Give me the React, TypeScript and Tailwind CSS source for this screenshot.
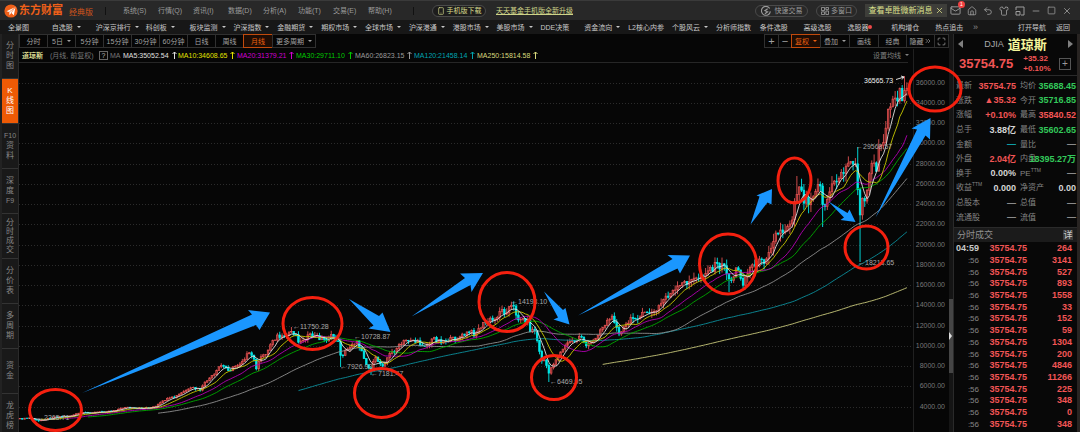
import type { ReactNode } from 'react';
import { ChevronsRight, House, Mail, Maximize, Minus, Shirt, Smartphone, Square, Undo2, X } from 'lucide-react';

type Point = [number, number];

const systemMenus = ['系统(S)', '行情(Q)', '资讯(I)', '数据(D)', '分析(A)', '功能(T)', '交易(E)', '帮助(H)'];

const markets: { label: string; menu?: boolean; dot?: boolean; wide?: boolean }[] = [
  { label: '全景图' },
  { label: '自选股', menu: true },
  { label: '沪深京排行', menu: true, wide: true },
  { label: '科创板', menu: true },
  { label: '板块监测', menu: true },
  { label: '沪深指数', menu: true },
  { label: '金融期货', menu: true },
  { label: '期权市场', menu: true },
  { label: '全球市场', menu: true },
  { label: '沪深港通', menu: true },
  { label: '港股市场', menu: true },
  { label: '美股市场', menu: true },
  { label: 'DDE决策' },
  { label: '资金流向', menu: true },
  { label: 'L2核心内参' },
  { label: '个股风云', menu: true },
  { label: '分析师指数' },
  { label: '条件选股' },
  { label: '高级选股' },
  { label: '选股器', dot: true },
  { label: '机构增仓' },
  { label: '热点追击' },
];

const sideTabs = [
  ['分', '时', '图'],
  ['K', '线', '图'],
  ['F10', '资', '料'],
  ['深', '度', 'F9'],
  ['分', '时', '成', '交'],
  ['分', '价', '表'],
  ['多', '周', '期'],
  ['资', '金'],
  ['龙', '虎', '榜'],
];

const periods = ['分时', '5日', '5分钟', '15分钟', '30分钟', '60分钟', '日线', '周线', '月线'];

const legend = [
  { label: 'MA5:35052.54', color: 'text-[#e0e0e0]', width: 'w-[55px]' },
  { label: 'MA10:34608.65', color: 'text-[#e0e000]', width: 'w-[59px]' },
  { label: 'MA20:31379.21', color: 'text-[#d000d0]', width: 'w-[59px]' },
  { label: 'MA30:29711.10', color: 'text-[#00c800]', width: 'w-[59px]' },
  { label: 'MA60:26823.15', color: 'text-[#9a9a9a]', width: 'w-[59px]' },
  { label: 'MA120:21458.14', color: 'text-[#00a5b0]', width: 'w-[63px]' },
  { label: 'MA250:15814.58', color: 'text-[#d8d87c]', width: 'w-[63px]' },
];

const RED = 'text-[#f25555]';
const GREEN = 'text-[#33c95a]';
const WHITE = 'text-[#d5d5d5]';

const quotes: { label: string; sup?: string; value: string; color: string }[] = [
  { label: '最新', value: '35754.75', color: RED },
  { label: '均价', value: '35688.45', color: GREEN },
  { label: '涨跌', value: '▲35.32', color: RED },
  { label: '今开', value: '35716.85', color: GREEN },
  { label: '涨幅', value: '+0.10%', color: RED },
  { label: '最高', value: '35840.52', color: RED },
  { label: '总手', value: '3.88亿', color: WHITE },
  { label: '最低', value: '35602.65', color: GREEN },
  { label: '金额', value: '—', color: 'text-[#0e9da5]' },
  { label: '量比', value: '—', color: 'text-[#8a8a8a]' },
  { label: '外盘', value: '2.04亿', color: RED },
  { label: '内盘', value: '18395.27万', color: GREEN },
  { label: '换手', value: '0.00%', color: WHITE },
  { label: 'PE', sup: 'TTM', value: '—', color: 'text-[#8a8a8a]' },
  { label: '收益', sup: 'TTM', value: '0.000', color: WHITE },
  { label: '净资产', value: '0.00', color: WHITE },
  { label: '总股本', value: '—', color: 'text-[#8a8a8a]' },
  { label: '总值', value: '—', color: 'text-[#8a8a8a]' },
  { label: '流通股', value: '—', color: 'text-[#8a8a8a]' },
  { label: '流值', value: '—', color: 'text-[#8a8a8a]' },
];

const volumes = [264, 3141, 527, 893, 1558, 33, 152, 59, 1304, 200, 4846, 11266, 225, 348, 0, 348];

// closing line of the index, in chart units
const closes: Point[] = [
  [20, 419], [30, 418], [38, 421], [55, 417], [70, 416], [80, 413], [90, 413], [100, 412], [110, 411], [120, 409],
  [125, 407], [135, 409], [145, 408], [155, 407], [165, 400], [175, 397], [185, 391], [193, 388], [200, 390],
  [208, 379], [215, 375], [220, 365], [230, 370], [240, 363], [248, 354], [253, 356], [256, 368], [262, 356],
  [268, 351], [272, 340], [278, 336], [284, 339], [290, 331], [295, 333], [300, 343], [305, 337], [312, 336],
  [318, 337], [325, 340], [333, 336], [338, 342], [341, 356], [347, 350], [353, 342], [357, 343], [362, 350],
  [366, 364], [370, 370], [376, 358], [382, 366], [385, 361], [390, 354], [395, 350], [405, 341], [411, 339],
  [420, 344], [428, 345], [434, 338], [440, 341], [450, 340], [460, 337], [470, 332], [475, 334], [482, 325],
  [490, 320], [495, 320], [500, 310], [505, 312], [510, 306], [514, 308], [518, 318], [523, 320], [527, 319],
  [530, 330], [535, 330], [538, 345], [541, 360], [545, 360], [549, 375], [552, 365], [556, 360], [562, 349],
  [570, 341], [575, 342], [581, 335], [586, 346], [592, 343], [600, 330], [610, 318], [615, 320], [620, 335],
  [625, 326], [635, 316], [640, 317], [647, 312], [655, 313], [665, 297], [675, 291], [685, 282], [695, 280],
  [705, 272], [712, 268], [717, 265], [726, 268], [730, 283], [737, 268], [743, 282], [750, 268], [757, 262],
  [763, 263], [770, 247], [775, 235], [785, 229], [792, 217], [795, 200], [799, 182], [803, 198], [810, 200],
  [818, 182], [821, 190], [824, 210], [830, 190], [835, 183], [840, 175], [848, 165], [855, 158], [857, 175],
  [859, 225], [862, 200], [866, 196], [870, 175], [872, 158], [876, 175], [880, 140], [883, 143], [887, 115],
  [892, 97], [896, 101], [900, 89], [902, 103], [905, 83], [908, 92],
];

const START = 20;
const STEP = 2.34;
const COUNT = 380;

function jitter(i: number) {
  const n = Math.sin(i * 12.9898) * 43758.5453;
  return n - Math.floor(n) - 0.5;
}

function closeAt(x: number) {
  const next = closes.findIndex(([px]) => px >= x);
  if (next <= 0) return closes[next === 0 ? 0 : closes.length - 1][1];
  const [x0, y0] = closes[next - 1];
  const [x1, y1] = closes[next];
  return y0 + ((y1 - y0) * (x - x0)) / (x1 - x0);
}

// long wicks at the turning points
const spikes: Point[] = [
  [38, 422], [291, 327], [341, 367], [371, 375], [511, 302], [549, 382], [730, 292], [743, 288],
  [797, 176], [823, 227], [857, 147], [859, 262], [905, 76],
];

const candles = Array.from({ length: COUNT }, (_, i) => {
  const x = START + i * STEP;
  // the swings grow with the index level
  const swing = 0.8 + Math.min(10, ((420 - closeAt(x)) / 330) * 16);
  return { x, y: closeAt(x) + jitter(i) * swing, swing };
}).map((item, i, all) => {
  const open = i ? all[i - 1].y : item.y;
  let top = Math.min(open, item.y) - Math.abs(jitter(i + 500)) * item.swing * 1.6;
  let bottom = Math.max(open, item.y) + Math.abs(jitter(i + 900)) * item.swing * 1.6;
  spikes.forEach(([sx, sy]) => {
    if (Math.abs(sx - item.x) <= STEP / 2) {
      top = Math.min(top, sy);
      bottom = Math.max(bottom, sy);
    }
  });
  return { x: item.x, open, close: item.y, top, bottom };
});

function average(length: number) {
  const points: string[] = [];
  let sum = 0;
  candles.forEach((c, i) => {
    sum += c.close;
    if (i >= length) sum -= candles[i - length].close;
    if (i >= length - 1) points.push(`${c.x.toFixed(1)},${(sum / length).toFixed(1)}`);
  });
  return points.join(' ');
}

const averages = [
  { length: 250, color: '#c8c87a' },
  { length: 120, color: '#0b8f9c' },
  { length: 60, color: '#909090' },
  { length: 30, color: '#00a800' },
  { length: 20, color: '#b400b4' },
  { length: 10, color: '#c8c800' },
  { length: 5, color: '#e0e0e0' },
];

const marks = [
  { x: 37, y: 418, text: '←2365.71' },
  { x: 293, y: 327, text: '←11750.28' },
  { x: 354, y: 337, text: '←10728.87' },
  { x: 340, y: 367, text: '←7926.93' },
  { x: 371, y: 374, text: '←7181.47' },
  { x: 511, y: 302, text: '←14198.10' },
  { x: 550, y: 382, text: '←6469.95' },
  { x: 856, y: 147, text: '←29568.57' },
  { x: 858, y: 263, text: '←18213.65' },
];

const circles = [
  [55.5, 410, 26, 20.5], [312.5, 323.5, 29.5, 26], [381.5, 393, 27, 24.5], [507, 302, 28, 29.5], [554, 377.5, 22.5, 22],
  [728, 264, 28.5, 30], [794.5, 180.5, 16.5, 22.5], [866.5, 247.5, 21.5, 21.5], [935, 89, 26, 22],
];

const arrows = [
  '82,393 252,314.5 248,310 270,312.5 259.5,330 256,325',
  '349,299 379,316 382.5,312.5 390.5,332 368.5,328.5 373.5,325.5',
  '411.5,316.5 465,278 460,273.5 483,273 471.5,292 470.5,285',
  '544,291.5 563,310 565.5,308 569.5,324.5 553.5,319.5 558,317.5',
  '578,315.5 672.5,259 667.5,255 690,255.5 680,273.5 677.5,268.5',
  '750.5,224.5 759.5,196.5 756.5,195.5 772,189 771.5,204.5 767.5,202.5',
  '828.5,201.5 847.5,213 849.5,209.5 855.5,222 840.5,220 844,217.5',
  '875.5,217.5 917,129.5 911.5,128.5 930.5,118 930,139.5 925.5,135.5',
];

function Chart() {
  return (
    <svg
      viewBox="19 62 930 370"
      className="pointer-events-none block w-full overflow-visible"
      fontFamily='"Liberation Sans", sans-serif'
      fontSize="7"
    >
      <path d="M19 62.5H908" stroke="#262626" />
      <path d="M913.5 49V432" stroke="#202020" />
      {Array.from({ length: 17 }, (_, i) => {
        const value = 4000 + i * 2000;
        const y = 406.5 - i * 20.25;
        return (
          <g key={value}>
            <path d={`M19 ${Math.round(y) + 0.5}H912`} stroke="#2b2b2b" strokeDasharray="1 2" />
            <text x="945" y={y + 2} textAnchor="end" fill="#777777">
              {value}.00
            </text>
          </g>
        );
      })}

      {candles.map((c) => {
        const rising = c.close <= c.open;
        const color = rising ? '#e05252' : '#00e8e8';
        return (
          <g key={c.x} stroke={color} fill={rising ? '#8a2828' : color}>
            <path d={`M${c.x} ${c.top}V${c.bottom}`} strokeWidth="0.9" />
            <rect
              x={c.x - 0.8}
              y={Math.min(c.open, c.close)}
              width="1.6"
              height={Math.max(0.4, Math.abs(c.open - c.close))}
              strokeWidth="0.7"
            />
          </g>
        );
      })}
      {averages.map(({ length, color }) => (
        <polyline key={length} points={average(length)} fill="none" stroke={color} strokeWidth="0.9" />
      ))}

      {marks.map(({ x, y, text }) => (
        <text key={text} x={x} y={y + 2} fill="#a8a8a8">
          {text}
        </text>
      ))}
      <text x="864" y="83" fill="#f0f0f0">
        36565.73
      </text>
      <path d="M896 79.5L904 77M901 76L904 77L902 79.5" stroke="#f0f0f0" strokeWidth="0.9" fill="none" />

      {circles.map(([cx, cy, rx, ry]) => (
        <ellipse key={cx} cx={cx} cy={cy} rx={rx} ry={ry} fill="none" stroke="#f5200f" strokeWidth="3" />
      ))}
      {arrows.map((points) => (
        <polygon key={points} points={points} fill="#1a97ff" />
      ))}
    </svg>
  );
}

function Caret() {
  return <span className="ml-1 inline-block border-x-2 border-t-2 border-x-transparent border-t-current" />;
}

function ToolButton({ active, className, children }: { active?: boolean; className: string; children: ReactNode }) {
  const tone = active ? 'border-[#c24a0c] bg-[#1f0d04] text-[#f0600f]' : 'border-[#303030] text-[#a0a0a0]';
  return (
    <button type="button" className={`-mr-px flex shrink-0 items-center justify-center border ${tone} ${className}`}>
      {children}
    </button>
  );
}

function TitleBar() {
  return (
    <header className="flex h-5 shrink-0 items-center border-t border-[#3a3a3a] bg-[#282828] pl-1 text-[#9c9c9c]">
      <svg viewBox="0 0 14 14" className="h-3.5 w-3.5">
        <circle cx="7" cy="7" r="6.6" fill="#f06019" />
        <path d="M2.5 7.2L11.5 3L9.8 11.2L7.2 8.8L5.6 11.3L5.2 8.1Z" fill="#fff" />
        <path d="M5.2 8.1L11.5 3L7.2 8.8" stroke="#f06019" strokeWidth="0.6" fill="none" />
      </svg>
      <span className="ml-px text-[11px] font-bold text-[#f06019]">东方财富</span>
      <span className="ml-1.5 pt-1 text-[8px] text-[#d2551b]">经典版</span>
      <span className="ml-3 h-2 w-px bg-[#111]" />
      <nav className="ml-[17px] flex">
        {systemMenus.map((menu) => (
          <button key={menu} type="button" className="w-[35px] text-left">
            {menu}
          </button>
        ))}
      </nav>
      <span className="ml-2.5 h-2 w-px bg-[#111]" />
      <button
        type="button"
        className="ml-[18px] flex h-3 w-[54px] items-center justify-center gap-0.5 rounded-full border border-[#4a4a4a] bg-[#1d1d1d] text-[#d8dc8c]"
      >
        <Smartphone size={8} />
        手机版下载
      </button>
      <a href="#upgrade" className="ml-2.5 text-[#cfd488] underline">
        天天基金手机版全新升级
      </a>
      <div className="ml-auto flex items-center">
        <button type="button" className="flex h-3 w-[53px] items-center justify-center gap-1 rounded-full border border-[#4a4a4a]">
          <svg viewBox="0 0 9 9" className="h-2.5 w-2.5" fill="none" stroke="currentColor">
            <path d="M7.8 2.2A4 4 0 1 0 8.4 4.8" />
            <path d="M6 2.5L3.5 4.2L6 5.2L3.5 7" />
          </svg>
          快速交易
        </button>
        <button type="button" className="ml-2 flex h-3 w-[41px] items-center justify-center gap-0.5 rounded-full border border-[#4a4a4a]">
          <svg viewBox="0 0 9 9" className="h-2 w-2" fill="none" stroke="currentColor">
            <path d="M.5 .5H4V4H.5ZM5.5 .5H8.5V3H5.5ZM.5 5.5H4V8.5H.5ZM5.5 4.5H8.5V8.5H5.5Z" />
          </svg>
          多窗口
        </button>
        <div className="ml-2 flex h-[13px] w-[82px] items-center justify-center gap-0.5 bg-[#3e3e3a] text-[8px] text-[#dfe28e]">
          查看卓胜微新消息
          <button type="button" aria-label="关闭消息">
            <X size={9} />
          </button>
        </div>
        <button type="button" aria-label="邮件" className="relative ml-[3px]">
          <Mail size={11} />
          <span className="absolute -top-1 -right-1 flex h-[7px] w-[7px] items-center justify-center rounded-full bg-[#f04040] text-[5px] text-white">
            1
          </span>
        </button>
        <div className="mr-2 ml-1.5 flex items-center gap-1.5">
          <button type="button" aria-label="主页"><House size={10} /></button>
          <button type="button" aria-label="返回"><Undo2 size={10} /></button>
          <button type="button" aria-label="换肤"><Shirt size={10} /></button>
          <button type="button" aria-label="小窗">
            <svg viewBox="0 0 10 10" className="h-2.5 w-2.5" fill="none" stroke="currentColor">
              <path d="M1 4V1H9V9H6M1 5.5H5V9H1Z" />
            </svg>
          </button>
          <button type="button" aria-label="最小化"><Minus size={10} /></button>
          <button type="button" aria-label="最大化"><Square size={9} /></button>
          <button type="button" aria-label="关闭"><X size={10} /></button>
        </div>
      </div>
    </header>
  );
}

function MarketBar() {
  return (
    <nav className="flex h-3.5 shrink-0 items-center bg-[#171717] pl-2 text-[#c8c8c8]">
      <div className="flex min-w-0 flex-1">
        {markets.map(({ label, menu, dot, wide }) => (
          <button
            key={label}
            type="button"
            className={`flex min-w-0 items-center whitespace-nowrap ${wide ? 'w-[50px] shrink-0' : 'flex-1 basis-0'}`}
          >
            {label}
            {menu && <Caret />}
            {dot && <span className="h-1 w-1 rounded-full bg-[#f04848]" />}
          </button>
        ))}
      </div>
      <button type="button" className="-ml-1.5 text-[9px] text-[#888]">»</button>
      <button type="button" className="ml-10">打开导航</button>
      <button type="button" className="mr-2.5 ml-2.5">返回</button>
    </nav>
  );
}

function SideTabs() {
  return (
    <nav className="flex w-[19px] shrink-0 flex-col overflow-hidden border-r border-l-2 border-r-[#2a2a2a] border-l-[#222]">
      {sideTabs.map((chars, i) => (
        <button
          key={i}
          type="button"
          className={`flex h-[45px] shrink-0 flex-col items-center justify-center border-b border-[#333] text-[8px] ${
            i === 1 ? 'bg-[#ee5a05] text-white' : 'bg-[#191919] text-[#868686]'
          } ${chars.length === 4 ? 'leading-[9px]' : 'leading-[10px]'}`}
        >
          {chars.map((char) => (
            <span key={char} className={char === 'F10' || char === 'F9' ? 'text-[7px]' : ''}>
              {char}
            </span>
          ))}
        </button>
      ))}
    </nav>
  );
}

function ChartToolbar() {
  return (
    <div className="flex h-3.5 shrink-0 items-stretch pr-px">
      {periods.map((period) => (
        <ToolButton key={period} active={period === '月线'} className={period === '月线' ? 'w-[30px]' : 'w-[29px]'}>
          {period}
          {period === '5日' && <Caret />}
        </ToolButton>
      ))}
      <ToolButton className="w-11">
        更多周期
        <Caret />
      </ToolButton>
      <div className="ml-auto flex">
        <ToolButton className="w-[15px] text-[11px]">+</ToolButton>
        <ToolButton className="w-3.5 text-[11px]">−</ToolButton>
        <ToolButton active className="w-[30px]">
          复权
          <Caret />
        </ToolButton>
        <ToolButton className="w-[30px]">
          叠加
          <Caret />
        </ToolButton>
        <ToolButton className="w-[30px]">画线</ToolButton>
        <ToolButton className="w-[29px]">经典</ToolButton>
        <ToolButton className="w-[29px]">
          隐藏
          <ChevronsRight size={8} />
        </ToolButton>
        <ToolButton className="w-[15px]">
          <Maximize size={9} />
        </ToolButton>
      </div>
    </div>
  );
}

function Legend() {
  return (
    <div className="flex h-3.5 shrink-0 items-center pl-[3px]">
      <span className="w-7 font-bold text-[#d8d890]">道琼斯</span>
      <span className="w-[49px] whitespace-nowrap text-[#777]">(月线, 前复权)</span>
      <button type="button" className="h-[9px] w-[9px] border border-[#666] leading-[7px] text-[#bbb]">?</button>
      <span className="ml-0.5 w-[13px] text-[#777]">MA</span>
      {legend.map(({ label, color, width }) => (
        <span key={label} className={`flex shrink-0 items-center gap-[3px] whitespace-nowrap ${color} ${width}`}>
          {label}
          <svg viewBox="0 0 5 8" className="h-2 w-[5px]" fill="none" stroke="currentColor">
            <path d="M2.5 8V1M.5 3L2.5 1L4.5 3" />
          </svg>
        </span>
      ))}
      <button type="button" className="mr-10 ml-auto flex items-center text-[#808080]">
        设置均线
        <Caret />
      </button>
    </div>
  );
}

function QuotePanel() {
  return (
    <aside className="flex w-[124px] shrink-0 flex-col border-l border-[#2a2a2a] bg-[#080808]">
      <div className="flex h-[18px] shrink-0 items-center justify-between px-1 pt-0.5">
        <button type="button" aria-label="上一个" className="border-y-4 border-r-[5px] border-y-transparent border-r-[#808080]" />
        <h1 className="flex items-center gap-1 whitespace-nowrap">
          <span className="text-[9px] text-[#a8a8a8]">DJIA</span>
          <span className="text-[13px] font-bold text-[#f5f59a]">道琼斯</span>
        </h1>
        <button type="button" aria-label="下一个" className="border-y-4 border-l-[5px] border-y-transparent border-l-[#808080]" />
      </div>
      <div className="flex h-6 shrink-0 items-center border-b border-[#2a2a2a] pl-[5px] font-bold text-[#f25555]">
        <span className="text-[13px]">35754.75</span>
        <div className="ml-2.5 flex flex-col text-[8px] leading-[10px]">
          <span>+35.32</span>
          <span>+0.10%</span>
        </div>
        <button type="button" aria-label="加自选" className="mr-1.5 ml-auto flex h-3 w-3 items-center justify-center border border-[#555] text-[10px] font-normal text-[#999]">
          +
        </button>
      </div>
      <dl className="grid h-[152px] shrink-0 grid-cols-[60px_56px] grid-rows-10 gap-x-1 border-b border-[#2a2a2a] pt-[3px] pb-0.5 pl-0.5">
        {quotes.map(({ label, sup, value, color }) => (
          <div key={label} className="relative flex items-center justify-between">
            <dt className="flex text-[8px] whitespace-nowrap text-[#858585]">
              {label}
              {sup && <sup className="-top-0.5 text-[5px] leading-[5px]">{sup}</sup>}
            </dt>
            <dd className={`absolute right-0 text-[9px] font-bold ${color}`}>{value}</dd>
          </div>
        ))}
      </dl>
      <div className="flex h-3.5 shrink-0 items-center justify-between bg-[#1b1b1b] pr-1 pl-[3px] text-[9px] text-[#909090]">
        <h2>分时成交</h2>
        <button type="button" className="h-2.5 w-2.5 bg-[#3c3c3c] leading-[10px] text-[#ccc]">详</button>
      </div>
      <table className="mt-px h-[187px] w-full table-fixed text-[9px] leading-[11px]">
        <tbody>
          {volumes.map((volume, i) => (
            <tr key={i} className="font-bold text-[#f25555]">
              <td className={`w-[25px] text-right ${i === 0 ? 'text-[#c8c8c8]' : 'text-[8px] font-normal text-[#858585]'}`}>
                {i === 0 ? '04:59' : ':56'}
              </td>
              <td className="w-12 text-right">35754.75</td>
              <td className="pr-[5px] text-right">{volume}</td>
            </tr>
          ))}
        </tbody>
      </table>
    </aside>
  );
}

export default function App() {
  return (
    <div className='flex h-screen flex-col overflow-hidden bg-[#060606] font-["Liberation_Sans","Noto_Sans_CJK_SC",sans-serif] text-[7px] leading-none'>
      <TitleBar />
      <MarketBar />
      <div className="flex min-h-0 flex-1">
        <SideTabs />
        <main className="z-10 flex min-w-0 flex-1 flex-col">
          <ChartToolbar />
          <Legend />
          <Chart />
        </main>
        <div className="flex w-1 shrink-0 items-center bg-[#151515] pt-[206px]">
          <div className="flex h-[74px] w-full items-center bg-[#454545]">
            <span className="border-y-4 border-l-[3px] border-y-transparent border-l-[#ddd]" />
          </div>
        </div>
        <QuotePanel />
        <div className="w-[3px] shrink-0 bg-[#282422]" />
      </div>
    </div>
  );
}
